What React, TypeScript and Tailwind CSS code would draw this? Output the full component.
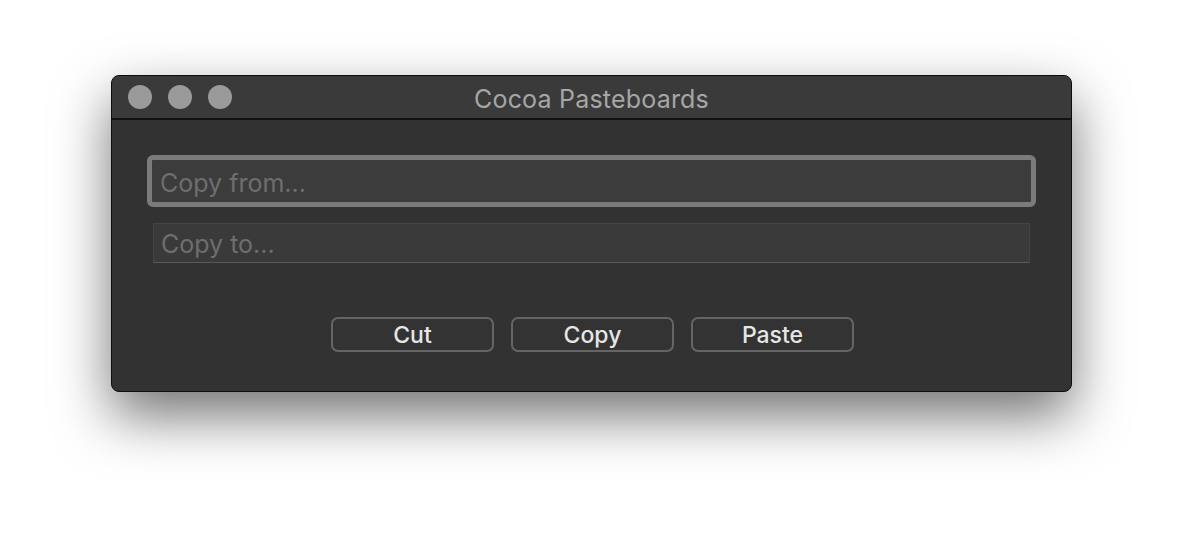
import * as React from 'react';

const TrafficLight: React.FC = () => (
  <span className="block h-[24px] w-[24px] rounded-full bg-[#9a9a9a]" />
);

const PushButton: React.FC<{ label: string }> = ({ label }) => (
  <button className="flex h-[35px] w-[163px] items-center justify-center rounded-[7px] border-2 border-[#656565] bg-[#333333] pt-[1px] text-[23px] font-medium leading-none text-[#e6e6e6]">
    {label}
  </button>
);

export default function App() {
  return (
    <div
      className="h-[540px] w-[1184px] overflow-hidden bg-white pl-[111px] pt-[75px]"
      style={{ fontFamily: 'Inter, "Liberation Sans", sans-serif' }}
    >
      <div className="flex h-[317px] w-[961px] flex-col overflow-hidden rounded-[8px] border border-[#0d0d0d] bg-[#323232] shadow-[0_24px_55px_rgba(0,0,0,0.55)]">
        {/* title bar */}
        <div className="relative flex h-[44px] shrink-0 items-center border-b-2 border-[#111111] bg-[#3a3a3a] pl-[16px]">
          <div className="flex items-center gap-[16px]">
            <TrafficLight />
            <TrafficLight />
            <TrafficLight />
          </div>
          <span className="absolute inset-x-0 top-[11px] text-center text-[25px] tracking-[0.2px] leading-none text-[#a6a6a6]">
            Cocoa Pasteboards
          </span>
        </div>

        {/* content */}
        <div className="flex flex-col px-[35px] pt-[35px]">
          <div className="rounded-[6px] border-[5px] border-[#7b7b7b] bg-[#3c3c3c]">
            <input
              placeholder="Copy from..."
              className="h-[42px] w-full bg-transparent px-[8px] pt-[3px] text-[25px] text-[#dddddd] outline-none placeholder:text-[#6e6e6e]"
            />
          </div>
          <div className="mx-[6px] mt-[16px] border border-[#444444] border-b-[#5a5a5a] bg-[#3a3a3a]">
            <input
              placeholder="Copy to..."
              className="h-[38px] w-full bg-transparent px-[7px] pt-[1px] text-[25px] text-[#dddddd] outline-none placeholder:text-[#6e6e6e]"
            />
          </div>
          <div className="mt-[54px] flex justify-center gap-[17px] pl-[2px]">
            <PushButton label="Cut" />
            <PushButton label="Copy" />
            <PushButton label="Paste" />
          </div>
        </div>
      </div>
    </div>
  );
}
